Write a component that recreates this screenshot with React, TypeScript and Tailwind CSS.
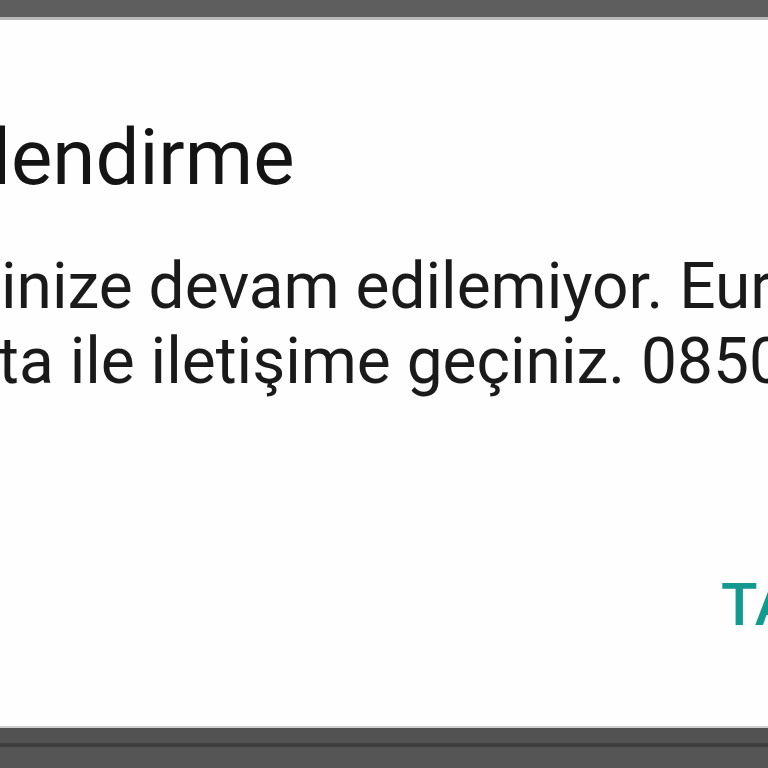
export default function App() {
  return (
    <div className="flex h-[768px] w-[768px] flex-col overflow-hidden bg-[#555555] font-['Roboto',sans-serif]">
      <div className="h-[17px] shrink-0 bg-[#5e5e5e]" />
      <div className="h-[3px] shrink-0 bg-[#b8b8b8]" />
      <div className="flex h-[706px] shrink-0 flex-col overflow-hidden bg-[#fefefe]">
        <div className="-ml-[8px] mt-[99px] whitespace-nowrap text-[78px] leading-[78px] text-[#141414]">
          lendirme
        </div>
        <div className="mt-[52px] text-[64px] leading-[75px] text-[#1a1a1a]">
          <div className="ml-[1px] whitespace-nowrap">inize devam edilemiyor. Euro</div>
          <div className="-ml-[2px] whitespace-nowrap">ta ile iletişime geçiniz. 0850 222</div>
        </div>
        <div className="mt-[176px] flex">
          <span className="ml-[721px] whitespace-nowrap text-[60px] font-medium leading-[60px] text-[#139a8f]">
            TAMAM
          </span>
        </div>
      </div>
      <div className="h-[2px] shrink-0 bg-[#cfcfcf]" />
      <div className="h-[15px] shrink-0 bg-[#525252]" />
      <div className="h-[4px] shrink-0 bg-[#3f3f3f]" />
      <div className="flex-1 bg-[#555555]" />
    </div>
  )
}
